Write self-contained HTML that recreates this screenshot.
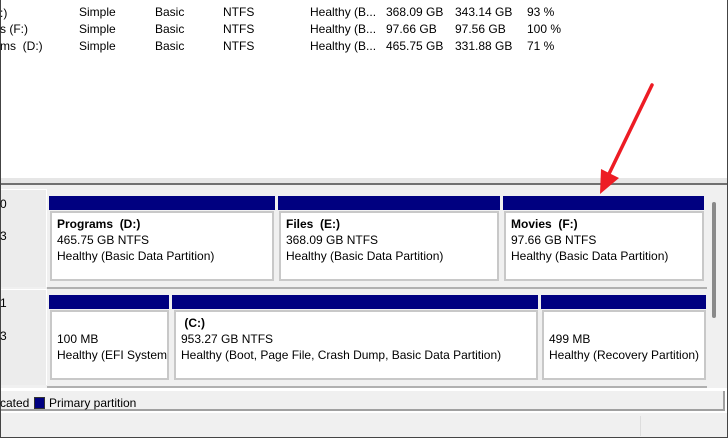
<!DOCTYPE html>
<html><head><meta charset="utf-8"><style>
*{margin:0;padding:0;box-sizing:border-box}
body{width:728px;height:438px;overflow:hidden;background:#fff;font-family:"Liberation Sans",sans-serif;font-size:12px;color:#000;position:relative}
.t{position:absolute;white-space:nowrap}
.a{position:absolute}
.bar{position:absolute;background:#000080}
.box{position:absolute;background:#fff;border:2px solid #c8c8c8;padding:3px 5px;line-height:16px;white-space:nowrap;overflow:hidden}
</style></head><body>
<div class="a" style="left:0;top:0;width:1px;height:438px;background:#444"></div>
<div class="a" style="right:0;top:0;width:1px;height:438px;background:#444"></div>
<div class="t" style="left:0;top:5px;line-height:16px">:)</div>
<div class="t" style="left:0;top:22px">s (F:)</div>
<div class="t" style="left:0;top:39px">ms&nbsp; (D:)</div>
<div class="t" style="left:79px;top:5px">Simple</div><div class="t" style="left:79px;top:22px">Simple</div><div class="t" style="left:79px;top:39px">Simple</div>
<div class="t" style="left:155px;top:5px">Basic</div><div class="t" style="left:155px;top:22px">Basic</div><div class="t" style="left:155px;top:39px">Basic</div>
<div class="t" style="left:223px;top:5px">NTFS</div><div class="t" style="left:223px;top:22px">NTFS</div><div class="t" style="left:223px;top:39px">NTFS</div>
<div class="t" style="left:310px;top:5px">Healthy (B...</div><div class="t" style="left:310px;top:22px">Healthy (B...</div><div class="t" style="left:310px;top:39px">Healthy (B...</div>
<div class="t" style="left:386px;top:5px">368.09 GB</div><div class="t" style="left:386px;top:22px">97.66 GB</div><div class="t" style="left:386px;top:39px">465.75 GB</div>
<div class="t" style="left:455px;top:5px">343.14 GB</div><div class="t" style="left:455px;top:22px">97.56 GB</div><div class="t" style="left:455px;top:39px">331.88 GB</div>
<div class="t" style="left:527px;top:5px">93 %</div><div class="t" style="left:527px;top:22px">100 %</div><div class="t" style="left:527px;top:39px">71 %</div>

<div class="a" style="left:1px;top:178px;width:726px;height:5px;background:#e6e6e6"></div>
<div class="a" style="left:1px;top:183px;width:726px;height:2px;background:#707070"></div>
<div class="a" style="left:1px;top:185px;width:726px;height:203px;background:#f0f0f0"></div>
<div class="a" style="left:1px;top:189px;width:46px;height:98px;background:#ececec;border-right:1px solid #fff;border-top:1px solid #fff"></div>
<div class="a" style="left:1px;top:289px;width:46px;height:96px;background:#ececec;border-right:1px solid #fff;border-top:1px solid #fff"></div>
<div class="t" style="left:0;top:197px">0</div><div class="t" style="left:0;top:229px">3</div>
<div class="t" style="left:0;top:296px">1</div><div class="t" style="left:0;top:329px">3</div>
<div class="a" style="left:47px;top:287px;width:660px;height:2px;background:#b0b0b0"></div>
<div class="a" style="left:47px;top:386px;width:660px;height:2px;background:#b0b0b0"></div>

<div class="bar" style="left:49px;top:196px;width:226px;height:14px"></div>
<div class="bar" style="left:278px;top:196px;width:222px;height:14px"></div>
<div class="bar" style="left:503px;top:196px;width:201px;height:14px"></div>
<div class="box" style="left:50px;top:211px;width:224px;height:70px"><b>Programs &nbsp;(D:)</b><br>465.75 GB NTFS<br>Healthy (Basic Data Partition)</div>
<div class="box" style="left:279px;top:211px;width:220px;height:70px"><b>Files &nbsp;(E:)</b><br>368.09 GB NTFS<br>Healthy (Basic Data Partition)</div>
<div class="box" style="left:504px;top:211px;width:200px;height:70px"><b>Movies &nbsp;(F:)</b><br>97.66 GB NTFS<br>Healthy (Basic Data Partition)</div>

<div class="bar" style="left:49px;top:295px;width:120px;height:14px"></div>
<div class="bar" style="left:172px;top:295px;width:366px;height:14px"></div>
<div class="bar" style="left:541px;top:295px;width:165px;height:14px"></div>
<div class="box" style="left:50px;top:310px;width:119px;height:70px;padding-top:19px">100 MB<br>Healthy (EFI System</div>
<div class="box" style="left:174px;top:310px;width:364px;height:70px"><b>&nbsp;(C:)</b><br>953.27 GB NTFS<br>Healthy (Boot, Page File, Crash Dump, Basic Data Partition)</div>
<div class="box" style="left:542px;top:310px;width:164px;height:70px;padding-top:19px">499 MB<br>Healthy (Recovery Partition)</div>

<div class="a" style="left:712px;top:202px;width:4px;height:116px;background:#8a8a8a;border-radius:2px"></div>

<div class="a" style="left:1px;top:391px;width:724px;height:20px;background:#f0f0f0;border-right:2px solid #a0a0a0;border-bottom:2px solid #a0a0a0"></div>
<div class="t" style="left:0;top:396px">cated</div>
<div class="a" style="left:34px;top:397px;width:11px;height:12px;background:#000080;border:1px solid #333"></div>
<div class="t" style="left:49px;top:396px">Primary partition</div>
<div class="a" style="left:1px;top:413px;width:726px;height:24px;background:#f0f0f0"></div>
<div class="a" style="left:640px;top:416px;width:1px;height:20px;background:#ddd"></div>
<div class="a" style="left:0;top:437px;width:728px;height:1px;background:#444"></div>

<svg class="a" style="left:0;top:0" width="728" height="438">
<line x1="652" y1="85" x2="607" y2="178" stroke="#ed1c24" stroke-width="3.5" stroke-linecap="round"/>
<polygon points="600,194 601,169 619,178" fill="#ed1c24"/>
</svg>
</body></html>
